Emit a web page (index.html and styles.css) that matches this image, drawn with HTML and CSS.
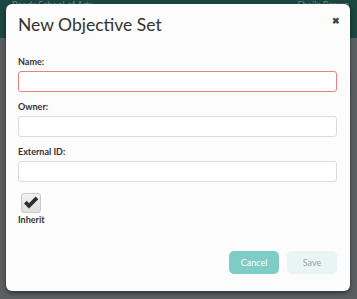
FILE: index.html
```html
<!DOCTYPE html>
<html lang="en">
<head>
  <meta charset="UTF-8">
  <title>New Objective Set</title>
  <link rel="stylesheet" href="styles.css">
</head>
<body>
  <div class="page">
    <div class="topbar">
      <span class="school">Roads School of Arts</span>
      <span class="user">Sheila Brown</span>
    </div>
    <div class="page-body"></div>
  </div>

  <div class="modal">
    <div class="modal-header">
      <h1>New Objective Set</h1>
      <span class="close">&#10006;</span>
    </div>

    <div class="modal-body">
      <div class="field">
        <label>Name:</label>
        <input type="text" class="input invalid">
      </div>
      <div class="field">
        <label>Owner:</label>
        <input type="text" class="input">
      </div>
      <div class="field">
        <label>External ID:</label>
        <input type="text" class="input">
      </div>

      <div class="check-field">
        <div class="checkbox">
          <svg width="16" height="14" viewBox="0 0 16 14">
            <path d="M1 7.5 L3.8 4.8 L6 7.2 L12.6 0.6 L15.3 3.3 L6 12.6 Z" fill="#2e2e2e"/>
          </svg>
        </div>
        <div class="check-label">Inherit</div>
      </div>
    </div>

    <div class="modal-footer">
      <button class="btn btn-cancel">Cancel</button>
      <button class="btn btn-save">Save</button>
    </div>
  </div>
</body>
</html>
```

FILE: styles.css
```css
body {
  margin: 0;
  padding: 0;
  font-family: 'Lato', 'Noto Sans', sans-serif;
  background: #3f4245;
  width: 357px;
  height: 299px;
  overflow: hidden;
  position: relative;
}

.page {
  height: 299px;
}

.topbar {
  height: 38px;
  background: #1c4640;
  display: flex;
  justify-content: space-between;
  padding: 0 8px 0 12px;
  font-size: 9px;
  color: #6f8d88;
  line-height: 10px;
}

.page-body {
  height: 261px;
  background: #5c5f62;
}

.modal {
  position: absolute;
  left: 6px;
  top: 4px;
  width: 344px;
  height: 287px;
  background: #fcfcfc;
  border-radius: 6px;
  box-shadow: 0 2px 4px rgba(0,0,0,0.5);
  display: flex;
  flex-direction: column;
}

.modal-header {
  display: flex;
  justify-content: space-between;
  padding: 10px 10px 0 12px;
}

.modal-header h1 {
  margin: 0;
  font-size: 17.5px;
  font-weight: 400;
  color: #333;
}

.close {
  font-size: 9px;
  color: #444;
  font-weight: bold;
  margin-top: 1px;
}

.modal-body {
  padding: 21px 13px 0 12px;
}

.field {
  margin-bottom: 9px;
}

.field:nth-child(3) {
  margin-bottom: 11px;
}

.field label {
  display: block;
  font-size: 9px;
  font-weight: bold;
  color: #333;
  margin-bottom: 4px;
}

.input {
  display: block;
  box-sizing: border-box;
  width: 319px;
  height: 21px;
  border: 1px solid #dcdcdc;
  border-radius: 3px;
  background: #fff;
  margin: 0;
}

.input.invalid {
  border-color: #ef7f7f;
}

.check-field {
  display: flex;
  flex-direction: column;
  align-items: flex-start;
}

.checkbox {
  width: 20px;
  height: 20px;
  box-sizing: border-box;
  margin-left: 3px;
  border: 1px solid #c9c9c9;
  border-radius: 3px;
  background: linear-gradient(#f2f2f2, #dedede);
  display: flex;
  align-items: center;
  justify-content: center;
}

.check-label {
  font-size: 9px;
  font-weight: bold;
  color: #333;
  margin-top: 1px;
}

.modal-footer {
  margin-top: auto;
  display: flex;
  justify-content: flex-end;
  gap: 8px;
  padding: 0 13px 17px 0;
}

.btn {
  width: 50px;
  height: 23px;
  border: none;
  border-radius: 5px;
  font-family: inherit;
  font-size: 9px;
}

.btn-cancel {
  background: #7ecdc4;
  color: #fff;
}

.btn-save {
  background: #e9f5f4;
  color: #9aa3a2;
}
```
